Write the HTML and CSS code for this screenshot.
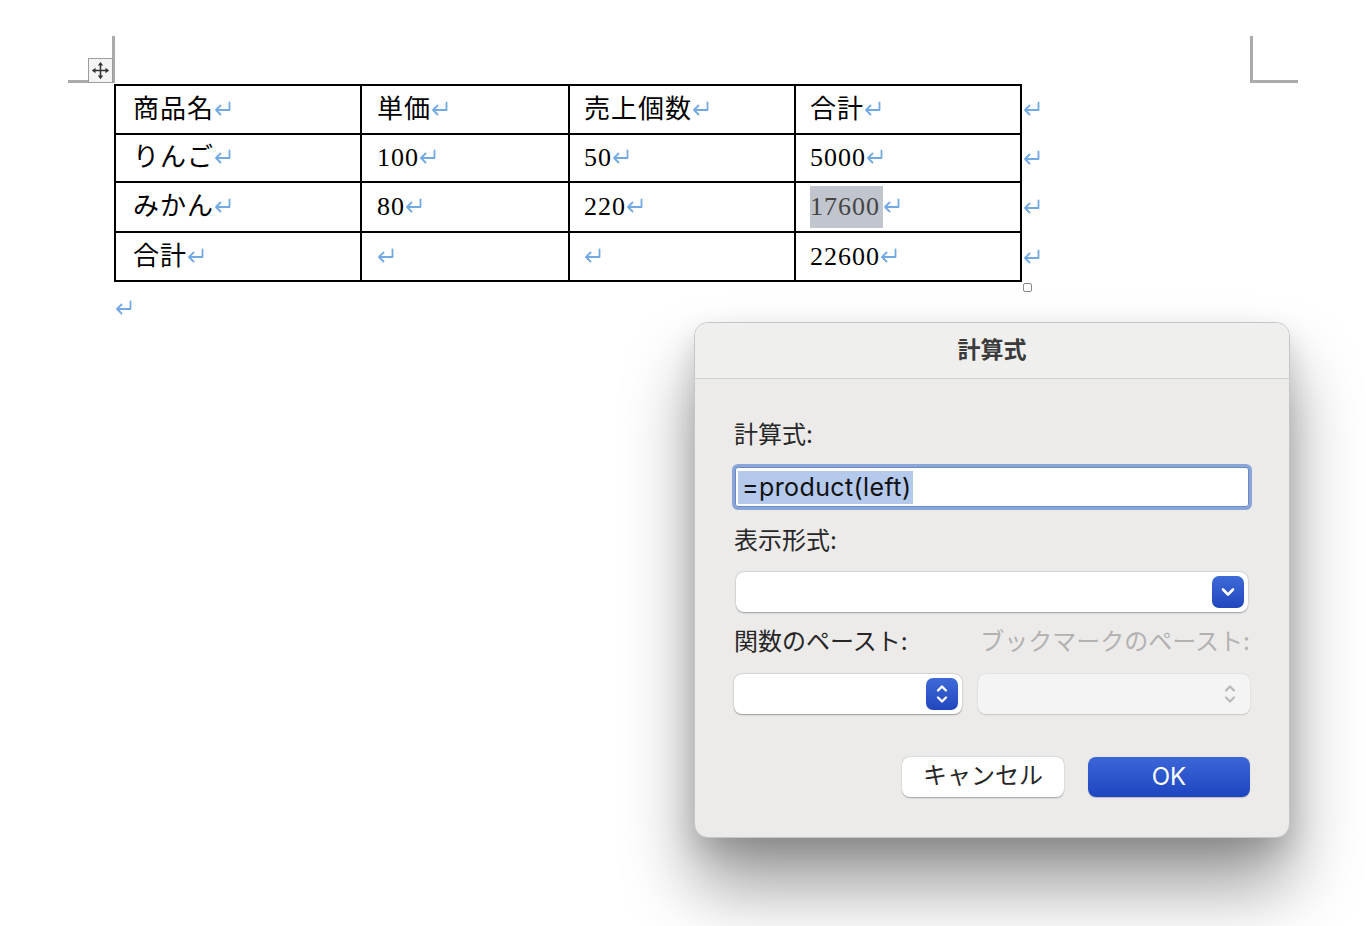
FILE: index.html
```html
<!DOCTYPE html>
<html lang="ja">
<head>
<meta charset="utf-8">
<title>計算式</title>
<link rel="stylesheet" href="styles.css">
</head>
<body>
<div class="page">
  <div class="crop crop-tl"></div>
  <div class="crop crop-tr"></div>
  <div class="move-handle">
    <svg viewBox="0 0 24 24" width="23" height="23">
      <path d="M12 6 V18 M6 12 H18" stroke="#333" stroke-width="1.6" fill="none"/>
      <path d="M12 3 L9.2 6.8 H14.8 Z M12 21 L9.2 17.2 H14.8 Z M3 12 L6.8 9.2 V14.8 Z M21 12 L17.2 9.2 V14.8 Z" fill="#333"/>
    </svg>
  </div>

  <table class="doc-table">
    <tr class="first">
      <td class="c1">商品名<svg class="rm" viewBox="0 0 17 15"><path d="M15.5 1.5 V9 H2 M6.5 4.5 L2 9 L6.5 13.5"/></svg></td>
      <td class="c2">単価<svg class="rm" viewBox="0 0 17 15"><path d="M15.5 1.5 V9 H2 M6.5 4.5 L2 9 L6.5 13.5"/></svg></td>
      <td class="c3">売上個数<svg class="rm" viewBox="0 0 17 15"><path d="M15.5 1.5 V9 H2 M6.5 4.5 L2 9 L6.5 13.5"/></svg></td>
      <td class="c4">合計<svg class="rm" viewBox="0 0 17 15"><path d="M15.5 1.5 V9 H2 M6.5 4.5 L2 9 L6.5 13.5"/></svg></td>
      <td class="eor"><svg class="rm" viewBox="0 0 17 15"><path d="M15.5 1.5 V9 H2 M6.5 4.5 L2 9 L6.5 13.5"/></svg></td>
    </tr>
    <tr>
      <td class="c1">りんご<svg class="rm" viewBox="0 0 17 15"><path d="M15.5 1.5 V9 H2 M6.5 4.5 L2 9 L6.5 13.5"/></svg></td>
      <td class="c2">100<svg class="rm" viewBox="0 0 17 15"><path d="M15.5 1.5 V9 H2 M6.5 4.5 L2 9 L6.5 13.5"/></svg></td>
      <td class="c3">50<svg class="rm" viewBox="0 0 17 15"><path d="M15.5 1.5 V9 H2 M6.5 4.5 L2 9 L6.5 13.5"/></svg></td>
      <td class="c4">5000<svg class="rm" viewBox="0 0 17 15"><path d="M15.5 1.5 V9 H2 M6.5 4.5 L2 9 L6.5 13.5"/></svg></td>
      <td class="eor"><svg class="rm" viewBox="0 0 17 15"><path d="M15.5 1.5 V9 H2 M6.5 4.5 L2 9 L6.5 13.5"/></svg></td>
    </tr>
    <tr>
      <td class="c1">みかん<svg class="rm" viewBox="0 0 17 15"><path d="M15.5 1.5 V9 H2 M6.5 4.5 L2 9 L6.5 13.5"/></svg></td>
      <td class="c2">80<svg class="rm" viewBox="0 0 17 15"><path d="M15.5 1.5 V9 H2 M6.5 4.5 L2 9 L6.5 13.5"/></svg></td>
      <td class="c3">220<svg class="rm" viewBox="0 0 17 15"><path d="M15.5 1.5 V9 H2 M6.5 4.5 L2 9 L6.5 13.5"/></svg></td>
      <td class="c4"><span class="sel">17600</span><svg class="rm" viewBox="0 0 17 15"><path d="M15.5 1.5 V9 H2 M6.5 4.5 L2 9 L6.5 13.5"/></svg></td>
      <td class="eor"><svg class="rm" viewBox="0 0 17 15"><path d="M15.5 1.5 V9 H2 M6.5 4.5 L2 9 L6.5 13.5"/></svg></td>
    </tr>
    <tr>
      <td class="c1">合計<svg class="rm" viewBox="0 0 17 15"><path d="M15.5 1.5 V9 H2 M6.5 4.5 L2 9 L6.5 13.5"/></svg></td>
      <td class="c2"><svg class="rm" viewBox="0 0 17 15"><path d="M15.5 1.5 V9 H2 M6.5 4.5 L2 9 L6.5 13.5"/></svg></td>
      <td class="c3"><svg class="rm" viewBox="0 0 17 15"><path d="M15.5 1.5 V9 H2 M6.5 4.5 L2 9 L6.5 13.5"/></svg></td>
      <td class="c4">22600<svg class="rm" viewBox="0 0 17 15"><path d="M15.5 1.5 V9 H2 M6.5 4.5 L2 9 L6.5 13.5"/></svg></td>
      <td class="eor"><svg class="rm" viewBox="0 0 17 15"><path d="M15.5 1.5 V9 H2 M6.5 4.5 L2 9 L6.5 13.5"/></svg></td>
    </tr>
  </table>
  <div class="resize-handle"></div>
  <div class="para"><svg class="rm" viewBox="0 0 17 15"><path d="M15.5 1.5 V9 H2 M6.5 4.5 L2 9 L6.5 13.5"/></svg></div>

  <div class="dialog">
    <div class="dlg-head">計算式</div>
    <div class="dlg-body">
      <div class="label">計算式:</div>
      <div class="input"><span class="input-sel">=product(left)</span></div>
      <div class="label label2">表示形式:</div>
      <div class="select wide">
        <span class="sbtn">
          <svg viewBox="0 0 32 32" width="32" height="32"><path d="M11 13.5 L16 18.5 L21 13.5" stroke="#fff" stroke-width="2.6" fill="none" stroke-linecap="round" stroke-linejoin="round"/></svg>
        </span>
      </div>
      <div class="label-row">
        <span class="label">関数のペースト:</span>
        <span class="label disabled">ブックマークのペースト:</span>
      </div>
      <div class="select-row">
        <div class="select">
          <span class="sbtn">
            <svg viewBox="0 0 32 32" width="32" height="32"><path d="M12 12.5 L16 8.5 L20 12.5 M12 19.5 L16 23.5 L20 19.5" stroke="#fff" stroke-width="2.4" fill="none" stroke-linecap="round" stroke-linejoin="round"/></svg>
          </span>
        </div>
        <div class="select off">
          <span class="sbtn-off">
            <svg viewBox="0 0 32 32" width="32" height="32"><path d="M12 12.5 L16 8.5 L20 12.5 M12 19.5 L16 23.5 L20 19.5" stroke="#b9b9b9" stroke-width="2.2" fill="none" stroke-linecap="round" stroke-linejoin="round"/></svg>
          </span>
        </div>
      </div>
      <div class="buttons">
        <button class="btn cancel">キャンセル</button>
        <button class="btn ok">OK</button>
      </div>
    </div>
  </div>
</div>
</body>
</html>
```

FILE: styles.css
```css
html, body {
  margin: 0;
  padding: 0;
  background: #ffffff;
}

.page {
  position: relative;
  width: 1366px;
  height: 926px;
  padding: 84px 0 0 114px;
  box-sizing: border-box;
  overflow: hidden;
}

.crop {
  position: absolute;
  border-color: #ababab;
  border-style: solid;
  border-width: 0;
}
.crop-tl {
  left: 68px;
  top: 36px;
  width: 44px;
  height: 44px;
  border-right-width: 3px;
  border-bottom-width: 3px;
}
.crop-tr {
  left: 1250px;
  top: 36px;
  width: 45px;
  height: 44px;
  border-left-width: 3px;
  border-bottom-width: 3px;
}

.move-handle {
  position: absolute;
  left: 88px;
  top: 58px;
  width: 23px;
  height: 23px;
  border: 1px solid #9c9c9c;
  background: #f4f4f4;
}
.move-handle svg { display: block; }

.doc-table {
  border-collapse: separate;
  border-spacing: 0;
  font-family: "Liberation Serif", "Noto Sans CJK JP", serif;
  font-size: 26px;
  letter-spacing: 1px;
  color: #000;
}
.doc-table td {
  border-right: 2px solid #000;
  border-bottom: 2px solid #000;
  height: 47px;
  padding: 0 0 0 15px;
  box-sizing: border-box;
  vertical-align: middle;
  line-height: 30px;
  white-space: nowrap;
}
.doc-table tr.first td { border-top: 2px solid #000; height: 51px; }
.doc-table tr:nth-child(2) td { height: 48px; }
.doc-table tr:nth-child(3) td { height: 50px; }
.doc-table tr:nth-child(4) td { height: 49px; }
.doc-table td.c1 { width: 248px; padding-left: 17px; border-left: 2px solid #000; }
.doc-table td.c2 { width: 208px; }
.doc-table td.c3 { width: 226px; padding-left: 14px; }
.doc-table td.c4 { width: 226px; padding-left: 14px; }
.doc-table tr td.eor {
  border: none;
  padding-left: 1px;
  width: 30px;
}

.rm {
  width: 17px;
  height: 15px;
  vertical-align: 2px;
  margin-left: 0;
}
.rm path {
  stroke: #72a9e2;
  stroke-width: 1.8;
  fill: none;
  stroke-linecap: round;
  stroke-linejoin: round;
}

.sel {
  display: inline-block;
  background: #c1c5cd;
  color: #454545;
  line-height: 42px;
  padding-right: 3px;
}

.resize-handle {
  position: absolute;
  left: 1023px;
  top: 283px;
  width: 7px;
  height: 7px;
  border: 1.5px solid #8a8a8a;
  border-radius: 2px;
  background: #fff;
}

.para {
  margin-top: 18px;
  padding-left: 1px;
  height: 16px;
}
.para .rm { display: block; margin: 0; }

.dialog {
  position: absolute;
  left: 694px;
  top: 322px;
  width: 596px;
  height: 516px;
  box-sizing: border-box;
  border: 1px solid #c6c6c6;
  border-radius: 14px;
  background: #ecebea;
  box-shadow: 0 48px 70px rgba(0, 0, 0, 0.40), 0 12px 28px rgba(0, 0, 0, 0.14);
  font-family: "Inter", "Noto Sans CJK JP", sans-serif;
  overflow: hidden;
}

.dlg-head {
  height: 56px;
  padding-bottom: 6px;
  box-sizing: border-box;
  border-bottom: 1px solid #d0d0d0;
  background: #efefee;
  display: flex;
  align-items: center;
  justify-content: center;
  font-family: "Noto Sans CJK JP", sans-serif;
  font-size: 23px;
  font-weight: 700;
  color: #3b3b3b;
}

.dlg-body {
  padding: 42px 39px 0 39px;
  display: flex;
  flex-direction: column;
}

.label {
  font-size: 24px;
  line-height: 28px;
  color: #272727;
  white-space: nowrap;
}
.label.disabled { color: #b2b2b2; }
.label2 { margin-top: 20px; }

.input {
  margin: 18px 1px 0 1px;
  height: 40px;
  box-sizing: border-box;
  background: #fff;
  border: 1px solid #6b8bc6;
  border-radius: 3px;
  box-shadow: 0 0 0 3px #8aa5d7;
  padding-left: 2px;
  display: flex;
  align-items: center;
}
.input-sel {
  font-size: 25px;
  letter-spacing: 0.4px;
  line-height: 33px;
  background: #b5c9ec;
  color: #111;
  padding: 0 2px 0 4px;
}

.select {
  height: 40px;
  background: #fff;
  border-radius: 8px;
  box-shadow: 0 0.5px 1.5px rgba(0, 0, 0, 0.32), 0 0 0 0.5px rgba(0, 0, 0, 0.06);
  display: flex;
  justify-content: flex-end;
  align-items: center;
  padding-right: 4px;
}
.select.wide { margin: 17px 2px 0 2px; }
.select.off {
  background: #f4f4f4;
  box-shadow: 0 0.5px 1.5px rgba(0, 0, 0, 0.16);
}

.sbtn {
  width: 32px;
  height: 32px;
  border-radius: 7px;
  background: linear-gradient(#3e6bd8, #2146bd);
}
.sbtn svg, .sbtn-off svg { display: block; }
.sbtn-off { width: 32px; height: 32px; }

.label-row {
  margin-top: 16px;
  display: flex;
  justify-content: space-between;
}

.select-row {
  margin-top: 18px;
  display: grid;
  grid-template-columns: 228px 1fr;
  gap: 16px;
}

.buttons {
  margin-top: 43px;
  display: flex;
  justify-content: flex-end;
  gap: 24px;
}
.btn {
  width: 162px;
  height: 40px;
  border: none;
  border-radius: 8px;
  font-family: "Inter", "Noto Sans CJK JP", sans-serif;
  font-size: 24px;
  padding: 0 0 3px 0;
  line-height: 37px;
}
.btn.cancel {
  background: #fff;
  color: #262626;
  box-shadow: 0 0.5px 1.5px rgba(0, 0, 0, 0.32);
}
.btn.ok {
  background: linear-gradient(#3b66d7, #1e45c1);
  color: #fff;
  box-shadow: 0 0.5px 1px rgba(0, 0, 0, 0.2);
  padding-bottom: 1px;
}
```
